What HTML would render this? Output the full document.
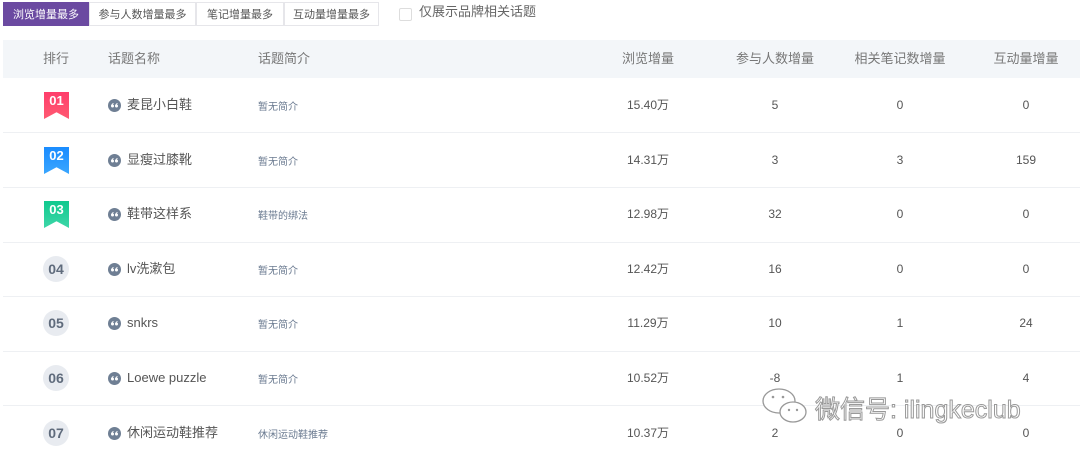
<!DOCTYPE html><html><head><meta charset="utf-8"><style>
body{margin:0;width:1080px;height:459px;overflow:hidden;background:#fff;font-family:"Liberation Sans","Noto Sans CJK SC",sans-serif;position:relative;color:#555}
.a{position:absolute;white-space:nowrap;line-height:16px;height:16px}
.tab{position:absolute;top:2px;height:24px;line-height:24px;font-size:11px;text-align:center;color:#555;border:1px solid #e6e6ea;box-sizing:border-box;background:#fff}
.c{transform:translateX(-50%);font-size:12px;color:#555}
.h{font-size:13px;color:#777}
.sep{position:absolute;left:3px;right:0;height:1px;background:#eef0f3}
.q{position:absolute;width:13px;height:13px}
.n{font-size:13px;color:#555}
.d{font-size:10px;color:#6a7a90;margin-top:3px}
.badge{position:absolute;width:25px;height:27px;color:#fff;font-weight:bold;font-size:13px;text-align:center;line-height:18px}
.circ{position:absolute;width:26px;height:26px;border-radius:50%;background:#e8ebf0;color:#5f6b7c;font-weight:bold;font-size:14px;line-height:26px;text-align:center}
</style></head><body>
<svg width="0" height="0" style="position:absolute"><defs><symbol id="qq" viewBox="0 0 13 13"><circle cx="6.5" cy="6.5" r="6.5" fill="#6f7f94"/><g fill="#fff"><circle cx="4.5" cy="7" r="1.5"/><circle cx="8.5" cy="7" r="1.5"/><path d="M3 7 Q3.5 4.5 5.5 4 L5.6 4.8 Q4.3 5.3 4.2 7Z"/><path d="M7 7 Q7.5 4.5 9.5 4 L9.6 4.8 Q8.3 5.3 8.2 7Z"/></g></symbol></defs></svg>
<div class="tab" style="left:3px;width:86px;background:#6b4aa1;color:#fff;border-color:#6b4aa1">浏览增量最多</div>
<div class="tab" style="left:89px;width:107px">参与人数增量最多</div>
<div class="tab" style="left:196px;width:88px">笔记增量最多</div>
<div class="tab" style="left:284px;width:95px">互动量增量最多</div>
<div class="a" style="left:399px;top:8px;width:11px;height:11px;border:1px solid #ddd;border-radius:2px"></div>
<div class="a" style="left:419px;top:4px;font-size:13px;color:#666">仅展示品牌相关话题</div>
<div class="a" style="left:3px;top:40px;width:1077px;height:38px;background:#f3f6f9"></div>
<div class="a h" style="left:43px;top:51px">排行</div>
<div class="a h" style="left:108px;top:51px">话题名称</div>
<div class="a h" style="left:258px;top:51px">话题简介</div>
<div class="a h c" style="left:648px;top:51px;font-size:13px;color:#777">浏览增量</div>
<div class="a h c" style="left:775px;top:51px;font-size:13px;color:#777">参与人数增量</div>
<div class="a h c" style="left:900px;top:51px;font-size:13px;color:#777">相关笔记数增量</div>
<div class="a h c" style="left:1026px;top:51px;font-size:13px;color:#777">互动量增量</div>

<div class="badge" style="left:44px;top:92px;background:linear-gradient(#ff3d6b,#ff5a72);clip-path:polygon(0 0,100% 0,100% 100%,50% 75%,0 100%)">01</div>
<div class="badge" style="left:44px;top:147px;background:linear-gradient(#1a8cff,#3aa6ff);clip-path:polygon(0 0,100% 0,100% 100%,50% 75%,0 100%)">02</div>
<div class="badge" style="left:44px;top:201px;background:linear-gradient(#10c98e,#3ed6a8);clip-path:polygon(0 0,100% 0,100% 100%,50% 75%,0 100%)">03</div>
<div class="circ" style="left:43px;top:256px">04</div>
<div class="circ" style="left:43px;top:310px">05</div>
<div class="circ" style="left:43px;top:365px">06</div>
<div class="circ" style="left:43px;top:420px">07</div>

<div class="sep" style="top:132px"></div><div class="sep" style="top:187px"></div><div class="sep" style="top:242px"></div><div class="sep" style="top:296px"></div><div class="sep" style="top:351px"></div><div class="sep" style="top:405px"></div>

<svg class="q" style="left:108px;top:99px"><use href="#qq"/></svg><div class="a n" style="left:127px;top:97px">麦昆小白鞋</div><div class="a d" style="left:258px;top:97px">暂无简介</div>
<svg class="q" style="left:108px;top:154px"><use href="#qq"/></svg><div class="a n" style="left:127px;top:152px">显瘦过膝靴</div><div class="a d" style="left:258px;top:152px">暂无简介</div>
<svg class="q" style="left:108px;top:208px"><use href="#qq"/></svg><div class="a n" style="left:127px;top:206px">鞋带这样系</div><div class="a d" style="left:258px;top:206px">鞋带的绑法</div>
<svg class="q" style="left:108px;top:263px"><use href="#qq"/></svg><div class="a n" style="left:127px;top:261px">lv洗漱包</div><div class="a d" style="left:258px;top:261px">暂无简介</div>
<svg class="q" style="left:108px;top:317px"><use href="#qq"/></svg><div class="a n" style="left:127px;top:315px">snkrs</div><div class="a d" style="left:258px;top:315px">暂无简介</div>
<svg class="q" style="left:108px;top:372px"><use href="#qq"/></svg><div class="a n" style="left:127px;top:370px">Loewe puzzle</div><div class="a d" style="left:258px;top:370px">暂无简介</div>
<svg class="q" style="left:108px;top:427px"><use href="#qq"/></svg><div class="a n" style="left:127px;top:425px">休闲运动鞋推荐</div><div class="a d" style="left:258px;top:425px">休闲运动鞋推荐</div>

<div class="a c" style="left:648px;top:97px">15.40万</div><div class="a c" style="left:775px;top:97px">5</div><div class="a c" style="left:900px;top:97px">0</div><div class="a c" style="left:1026px;top:97px">0</div>
<div class="a c" style="left:648px;top:152px">14.31万</div><div class="a c" style="left:775px;top:152px">3</div><div class="a c" style="left:900px;top:152px">3</div><div class="a c" style="left:1026px;top:152px">159</div>
<div class="a c" style="left:648px;top:206px">12.98万</div><div class="a c" style="left:775px;top:206px">32</div><div class="a c" style="left:900px;top:206px">0</div><div class="a c" style="left:1026px;top:206px">0</div>
<div class="a c" style="left:648px;top:261px">12.42万</div><div class="a c" style="left:775px;top:261px">16</div><div class="a c" style="left:900px;top:261px">0</div><div class="a c" style="left:1026px;top:261px">0</div>
<div class="a c" style="left:648px;top:315px">11.29万</div><div class="a c" style="left:775px;top:315px">10</div><div class="a c" style="left:900px;top:315px">1</div><div class="a c" style="left:1026px;top:315px">24</div>
<div class="a c" style="left:648px;top:370px">10.52万</div><div class="a c" style="left:775px;top:370px">-8</div><div class="a c" style="left:900px;top:370px">1</div><div class="a c" style="left:1026px;top:370px">4</div>
<div class="a c" style="left:648px;top:425px">10.37万</div><div class="a c" style="left:775px;top:425px">2</div><div class="a c" style="left:900px;top:425px">0</div><div class="a c" style="left:1026px;top:425px">0</div>

<svg class="a" style="left:760px;top:386px;height:40px" width="50" height="40" viewBox="0 0 50 40"><g fill="#fff" stroke="#999" stroke-width="1.3"><ellipse cx="19" cy="15" rx="16" ry="12"/><ellipse cx="33" cy="26" rx="13" ry="10"/></g><g fill="#999"><circle cx="13" cy="11" r="1.3"/><circle cx="23" cy="11" r="1.3"/><circle cx="29" cy="24" r="1.2"/><circle cx="37" cy="24" r="1.2"/></g></svg>
<div class="a" style="left:815px;top:395px;font-size:25px;line-height:30px;height:30px;color:#fff;-webkit-text-stroke:1px #999">微信号: ilingkeclub</div>
</body></html>
